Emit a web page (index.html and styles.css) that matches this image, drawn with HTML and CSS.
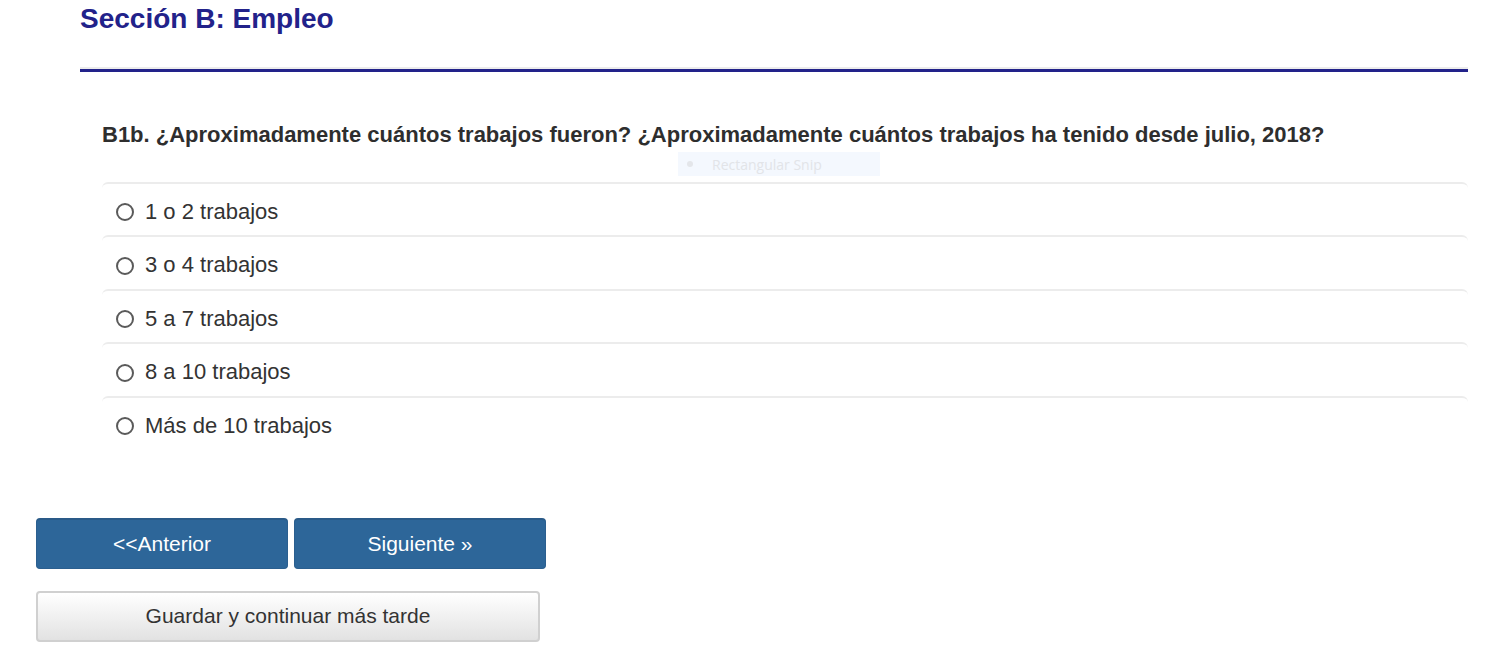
FILE: index.html
```html
<!DOCTYPE html>
<html lang="es">
<head>
<meta charset="utf-8">
<title>Sección B: Empleo</title>
<link rel="stylesheet" href="styles.css">
</head>
<body>
<div class="page">
  <header class="section-head">
    <h1 class="section-title">Sección B: Empleo</h1>
    <div class="rule"></div>
  </header>

  <div class="question">
    <h2 class="q-text">B1b. ¿Aproximadamente cuántos trabajos fueron? ¿Aproximadamente cuántos trabajos ha tenido desde julio, 2018?</h2>
    <div class="snip"><span class="snip-dot"></span><span class="snip-label">Rectangular Snip</span></div>
    <ul class="options">
      <li class="option"><span class="radio"></span><span class="opt-label">1 o 2 trabajos</span></li>
      <li class="option"><span class="radio"></span><span class="opt-label">3 o 4 trabajos</span></li>
      <li class="option"><span class="radio"></span><span class="opt-label">5 a 7 trabajos</span></li>
      <li class="option"><span class="radio"></span><span class="opt-label">8 a 10 trabajos</span></li>
      <li class="option"><span class="radio"></span><span class="opt-label">Más de 10 trabajos</span></li>
    </ul>
  </div>
</div>

<div class="actions">
  <div class="nav-row">
    <button class="btn btn-primary">&lt;&lt;Anterior</button>
    <button class="btn btn-primary">Siguiente »</button>
  </div>
  <button class="btn btn-default">Guardar y continuar más tarde</button>
</div>
</body>
</html>
```

FILE: styles.css
```css
html, body {
  margin: 0;
  padding: 0;
  background: #fff;
}
body {
  font-family: "Liberation Sans", Arial, sans-serif;
  color: #333;
}
.page {
  padding: 0 19px 0 80px;
}
.section-head {
  padding-top: 3px;
}
.section-title {
  margin: 0;
  font-size: 28px;
  line-height: 32px;
  font-weight: bold;
  color: #22228a;
}
.rule {
  margin-top: 32px;
  height: 3px;
  background: #22228a;
  border-top: 2px solid #ececec;
}
.question {
  position: relative;
  padding-left: 22px;
  padding-top: 50px;
}
.q-text {
  margin: 0;
  font-size: 22px;
  line-height: 26px;
  font-weight: bold;
  color: #2e2e2e;
}
.snip {
  position: absolute;
  left: 598px;
  top: 80px;
  width: 202px;
  height: 24px;
  background: #f4f8fe;
  display: flex;
  align-items: center;
}
.snip-dot {
  width: 6px;
  height: 6px;
  border-radius: 50%;
  background: #e4e6ea;
  margin-left: 9px;
}
.snip-label {
  margin-left: 19px;
  font-family: "Open Sans", "Noto Sans", sans-serif;
  font-size: 14px;
  color: #e2e4e8;
}
.options {
  list-style: none;
  margin: 34px 0 0;
  padding: 0;
}
.option {
  display: flex;
  align-items: center;
  height: 48px;
  padding-top: 4px;
  border-top: 2px solid #ececec;
  border-radius: 6px 6px 0 0;
  padding-left: 14px;
  margin-top: -0.5px;
}
.radio {
  box-sizing: border-box;
  width: 18px;
  height: 18px;
  border: 2px solid #5a5a5a;
  border-radius: 50%;
  margin-right: 11px;
  margin-top: 1px;
}
.opt-label {
  font-size: 22px;
  line-height: 26px;
  color: #333;
}
.actions {
  margin: 68px 0 0 36px;
  display: flex;
  flex-direction: column;
  align-items: flex-start;
  gap: 22px;
}
.nav-row {
  display: flex;
  gap: 6px;
}
.btn {
  font-family: "Liberation Sans", Arial, sans-serif;
  font-size: 21px;
  border-radius: 4px;
  cursor: pointer;
}
.btn-primary {
  width: 252px;
  height: 51px;
  color: #fff;
  background: #2d6699;
  border: 1px solid #2b5f8f;
  border-top: 2px solid #2a5a88;
}
.btn-default {
  width: 504px;
  height: 51px;
  color: #333;
  background: linear-gradient(#ffffff, #e2e2e2);
  border: 2px solid #d0d0d0;
}
```
